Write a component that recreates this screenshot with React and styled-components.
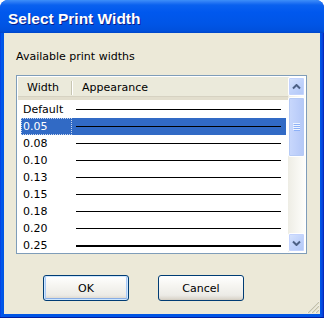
import styled, { createGlobalStyle } from "styled-components";

const GlobalStyle = createGlobalStyle`
  html, body {
    margin: 0;
    padding: 0;
    background: #ffffff;
  }
  body {
    font-family: "DejaVu Sans", "Liberation Sans", sans-serif;
  }
`;

const Window = styled.div`
  width: 324px;
  height: 318px;
  box-sizing: border-box;
  display: flex;
  flex-direction: column;
  border-radius: 8px 8px 0 0;
  overflow: hidden;
  background: linear-gradient(to right, #0831d9 0, #0058ee 1px, #0055e5 3px, #0055e5 calc(100% - 3px), #0a3ad6 calc(100% - 1px), #001ea0 100%);
  border-bottom: 1px solid #001ea0;
`;

const TitleBar = styled.div`
  height: 33px;
  flex: none;
  display: flex;
  align-items: center;
  padding: 4px 0 0 8px;
  box-sizing: border-box;
  background: linear-gradient(
    to bottom,
    #3d8ff9 0,
    #2b7bf5 2px,
    #0a61ef 5px,
    #0058ee 12px,
    #0055e6 24px,
    #0050dc 31px,
    #0046c8 33px
  );
`;

const Title = styled.span`
  font-family: "Liberation Sans", Arial, sans-serif;
  font-weight: bold;
  font-size: 15.5px;
  color: #ffffff;
  text-shadow: 1px 1px 0 #0a1e8c;
  letter-spacing: 0;
`;

const Body = styled.div`
  position: relative;
  flex: 1;
  margin: 0 4px 3px 4px;
  background: #ece9d8;
  padding: 17px 0 0 12px;
  display: flex;
  flex-direction: column;
  font-size: 11px;
  color: #000000;
`;

const Label = styled.div`
  height: 14px;
  line-height: 14px;
  margin-bottom: 11px;
`;

const ListBox = styled.div`
  width: 291px;
  height: 179px;
  box-sizing: border-box;
  border: 1px solid #7f9db9;
  padding: 1px;
  background: #ffffff;
  display: flex;
  overflow: hidden;
`;

const ListArea = styled.div`
  flex: 1;
  display: flex;
  flex-direction: column;
  overflow: hidden;
`;

const Header = styled.div`
  height: 23px;
  flex: none;
  display: flex;
  box-sizing: border-box;
  background: #ebeadb;
  border-bottom: 3px solid #e2decd;
  box-shadow: inset 0 -1px 0 #d6d2c2;
`;

const HeaderCell = styled.div`
  width: ${(p) => p.$width || "auto"};
  flex: ${(p) => (p.$width ? "none" : "1")};
  display: flex;
  align-items: center;
  padding-left: ${(p) => p.$pad}px;
  box-sizing: border-box;
  position: relative;
  ${(p) =>
    p.$divider &&
    `
    &::after {
      content: "";
      position: absolute;
      right: 0;
      top: 4px;
      bottom: 2px;
      width: 1px;
      background: #c7c5b2;
      box-shadow: 1px 0 0 #ffffff;
    }
  `}
`;

const Rows = styled.div`
  display: flex;
  flex-direction: column;
  padding: 1px 2px 0 3px;
`;

const Row = styled.div`
  height: 17px;
  flex: none;
  display: flex;
  align-items: stretch;
  background: ${(p) => (p.$selected ? "#316ac5" : "transparent")};
  color: ${(p) => (p.$selected ? "#ffffff" : "#000000")};
`;

const WidthCell = styled.div`
  width: 51px;
  flex: none;
  box-sizing: border-box;
  padding-left: 2px;
  display: flex;
  align-items: center;
  outline: ${(p) => (p.$focused ? "1px dotted #c9d6ee" : "none")};
  outline-offset: -1px;
`;

const LineCell = styled.div`
  flex: 1;
  display: flex;
  align-items: center;
  padding: 0 5px 0 4px;
`;

const Line = styled.div`
  width: 100%;
  height: ${(p) => p.$thickness}px;
  background: #000000;
`;

const ScrollBar = styled.div`
  width: 17px;
  flex: none;
  display: flex;
  flex-direction: column;
  background: linear-gradient(to right, #eeede5, #fefefb);
`;

const ScrollButton = styled.div`
  height: 19px;
  flex: none;
  box-sizing: border-box;
  border: 1px solid #ffffff;
  border-radius: 2px;
  background: linear-gradient(135deg, #d8e4fd 0%, #c1d3fb 50%, #b1c7f7 100%);
  box-shadow: inset 0 0 0 1px #c3d3fd;
  display: flex;
  align-items: center;
  justify-content: center;
`;

const Thumb = styled.div`
  height: 60px;
  margin-top: 1px;
  flex: none;
  box-sizing: border-box;
  border: 1px solid #ffffff;
  border-radius: 2px;
  background: linear-gradient(to right, #c9d8fc, #bccefa 60%, #b4c8f6);
  box-shadow: inset 0 0 0 1px #b5caf5;
  display: flex;
  align-items: center;
  justify-content: center;
`;

const Track = styled.div`
  flex: 1;
`;

const Arrow = ({ down }) => (
  <svg width="9" height="6" viewBox="0 0 9 6">
    <path
      d={down ? "M1 1.5 L4.5 5 L8 1.5" : "M1 4.5 L4.5 1 L8 4.5"}
      fill="none"
      stroke="#4d6185"
      strokeWidth="2"
    />
  </svg>
);

const GripLines = () => (
  <svg width="7" height="8" viewBox="0 0 7 8">
    {[0, 2, 4, 6].map((y) => (
      <g key={y}>
        <rect x="0" y={y} width="7" height="1" fill="#eef4fe" />
        <rect x="1" y={y + 1} width="6" height="1" fill="#8cb0f8" />
      </g>
    ))}
  </svg>
);

const ButtonRow = styled.div`
  display: flex;
  gap: 29px;
  margin-top: 21px;
  padding-left: 27px;
`;

const Button = styled.button`
  width: 86px;
  height: 26px;
  box-sizing: border-box;
  border: 1px solid #003c74;
  border-radius: 3px;
  background: linear-gradient(to bottom, #ffffff 0%, #f6f5f1 40%, #ecebe6 80%, #d6d0c5 100%);
  box-shadow: ${(p) =>
    p.$default
      ? "inset 0 0 0 1px #cee7ff, inset 0 -2px 0 #89ade4, inset 2px 0 0 #a9c9f5, inset -2px 0 0 #a9c9f5"
      : "inset 0 -1px 0 #d6d0c5"};
  font-family: "DejaVu Sans", "Liberation Sans", sans-serif;
  font-size: 11px;
  color: #000000;
  padding: 0;
`;

const Grip = styled.svg`
  position: absolute;
  right: 1px;
  bottom: 1px;
`;

const widths = [
  { label: "Default", thickness: 1 },
  { label: "0.05", thickness: 1, selected: true },
  { label: "0.08", thickness: 1 },
  { label: "0.10", thickness: 1 },
  { label: "0.13", thickness: 1 },
  { label: "0.15", thickness: 1 },
  { label: "0.18", thickness: 1 },
  { label: "0.20", thickness: 1 },
  { label: "0.25", thickness: 2 },
];

export default function App() {
  return (
    <>
      <GlobalStyle />
      <Window>
        <TitleBar>
          <Title>Select Print Width</Title>
        </TitleBar>
        <Body>
          <Label>Available print widths</Label>
          <ListBox>
            <ListArea>
              <Header>
                <HeaderCell $width="54px" $pad={9} $divider>
                  Width
                </HeaderCell>
                <HeaderCell $pad={10}>Appearance</HeaderCell>
              </Header>
              <Rows>
                {widths.map((w) => (
                  <Row key={w.label} $selected={w.selected}>
                    <WidthCell $focused={w.selected}>{w.label}</WidthCell>
                    <LineCell>
                      <Line $thickness={w.thickness} />
                    </LineCell>
                  </Row>
                ))}
              </Rows>
            </ListArea>
            <ScrollBar>
              <ScrollButton>
                <Arrow />
              </ScrollButton>
              <Thumb>
                <GripLines />
              </Thumb>
              <Track />
              <ScrollButton>
                <Arrow down />
              </ScrollButton>
            </ScrollBar>
          </ListBox>
          <ButtonRow>
            <Button $default>OK</Button>
            <Button>Cancel</Button>
          </ButtonRow>
          <Grip width="12" height="12" viewBox="0 0 12 12">
            {[0, 4, 8].map((o) => (
              <g key={o}>
                <line x1={12} y1={o} x2={o} y2={12} stroke="#ffffff" strokeWidth="1" />
                <line x1={12} y1={o + 1} x2={o + 1} y2={12} stroke="#c2bfa8" strokeWidth="1.2" />
              </g>
            ))}
          </Grip>
        </Body>
      </Window>
    </>
  );
}
